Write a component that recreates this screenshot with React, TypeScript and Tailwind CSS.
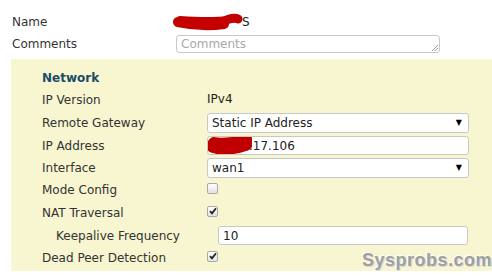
import React from "react";

const font = { fontFamily: '"DejaVu Sans", Verdana, sans-serif' };

const Scribble = ({ w, h, k = 0.55 }: { w: number; h: number; k?: number }) => (
  <svg width={w} height={h} viewBox={`0 0 ${w} ${h}`} className="block">
    <path
      d={`M5 ${h / 2 + 1} C ${w * 0.3} ${h / 2 + 4}, ${w * 0.6} ${h / 2 + 3}, ${w - 6} ${h / 2 - 1} M6 ${h / 2 - 2} C ${w * 0.35} ${h / 2}, ${w * 0.7} ${h / 2 - 3}, ${w - 5} ${h / 2 - 4}`}
      stroke="#c00000"
      strokeWidth={h * k}
      strokeLinecap="round"
      fill="none"
    />
  </svg>
);

const NameScribble = () => (
  <svg width="72" height="19" viewBox="0 0 72 19" className="block">
    <g stroke="#c40000" strokeLinecap="round" fill="none">
      <path d="M6 9 C 20 12, 38 13, 52 11" strokeWidth="10" />
      <path d="M8 6 C 22 7, 40 8, 56 6" strokeWidth="6" />
      <path d="M50 9 C 56 6, 62 4, 66 6" strokeWidth="9" />
    </g>
  </svg>
);

const Check = ({ on }: { on?: boolean }) => (
  <div className="flex h-[11px] w-[11px] items-center justify-center rounded-[2px] border border-[#a9a9a9] bg-gradient-to-b from-white to-[#e3e3e3]">
    {on && (
      <svg width="8" height="8" viewBox="0 0 8 8">
        <path d="M1 4.2 L3 6.4 L7 1.2" stroke="#222" strokeWidth="1.8" fill="none" />
      </svg>
    )}
  </div>
);

const Select = ({ value }: { value: string }) => (
  <div className="flex h-[20px] w-[262px] items-center justify-between rounded-[3px] border border-[#c8c8c8] bg-white pl-[4px] pr-[6px] text-[12px] text-[#222]">
    <span>{value}</span>
    <span className="text-[8px] text-black">▼</span>
  </div>
);

const Row = ({
  label,
  h,
  indent,
  children,
}: {
  label: string;
  h: string;
  indent?: boolean;
  children?: React.ReactNode;
}) => (
  <div className={`flex items-center ${h}`}>
    <div className={`w-[165px] shrink-0 text-[12px] text-[#333] ${indent ? "pl-[14px]" : ""}`}>
      {label}
    </div>
    {children}
  </div>
);

export default function App() {
  return (
    <div className="relative h-[276px] w-[492px] overflow-hidden bg-white" style={font}>
      {/* top fields */}
      <div className="pt-[12px]">
        <div className="flex h-[20px] items-center pl-[12px] text-[12px] text-[#333]">
          <div className="w-[160px]">Name</div>
          <div className="flex items-center">
            <NameScribble />
            <span className="-ml-[2px] text-[12px] text-[#222]">S</span>
          </div>
        </div>
        <div className="mt-[2px] flex h-[20px] items-center pl-[12px] text-[12px] text-[#333]">
          <div className="w-[164px]">Comments</div>
          <div className="relative h-[18px] w-[264px] rounded-[3px] border border-[#c8c8c8] bg-white pl-[4px] text-[12px] leading-[16px] text-[#aaa]">
            Comments
            <svg width="6" height="6" className="absolute bottom-[1px] right-[1px]">
              <path d="M0 6 L6 0 M3 6 L6 3" stroke="#888" strokeWidth="0.8" />
            </svg>
          </div>
        </div>
      </div>

      {/* network panel */}
      <div className="ml-[11px] mt-[5px] bg-[#f7f6d0] pb-[2px] pl-[31px] pt-[9px]">
        <div className="flex h-[20px] items-center text-[12px] font-bold text-[#1c4b66]">
          Network
        </div>
        <Row label="IP Version" h="h-[23px]">
          <span className="-mt-[2px] text-[12px] text-[#222]">IPv4</span>
        </Row>
        <Row label="Remote Gateway" h="h-[23px]">
          <Select value="Static IP Address" />
        </Row>
        <Row label="IP Address" h="h-[23px]">
          <div className="flex h-[19px] w-[262px] items-center rounded-[3px] border border-[#c8c8c8] bg-white text-[12px] text-[#222]">
            <Scribble w={44} h={17} k={0.75} />
            <span className="-ml-[3px]">.17.106</span>
          </div>
        </Row>
        <Row label="Interface" h="h-[22px]">
          <Select value="wan1" />
        </Row>
        <Row label="Mode Config" h="h-[22px]">
          <div className="-mt-[4px]">
            <Check />
          </div>
        </Row>
        <Row label="NAT Traversal" h="h-[23px]">
          <div className="-mt-[3px]">
            <Check on />
          </div>
        </Row>
        <Row label="Keepalive Frequency" h="h-[23px]" indent>
          <div className="ml-[11px] flex h-[19px] w-[250px] items-center rounded-[3px] border border-[#c8c8c8] bg-white pl-[4px] text-[12px] text-[#222]">
            10
          </div>
        </Row>
        <Row label="Dead Peer Detection" h="h-[22px]">
          <div className="-mt-[4px]">
            <Check on />
          </div>
        </Row>
      </div>

      {/* watermark */}
      <div
        className="absolute left-[362px] top-[247px] text-[18px] font-bold tracking-[0.5px] text-[#a0a0a0]"
        style={{ fontFamily: '"Liberation Sans", Arial, sans-serif', textShadow: "1px 1px 0 #d8d8d8, -1px -1px 0 #fff" }}
      >
        Sysprobs.com
      </div>
    </div>
  );
}
